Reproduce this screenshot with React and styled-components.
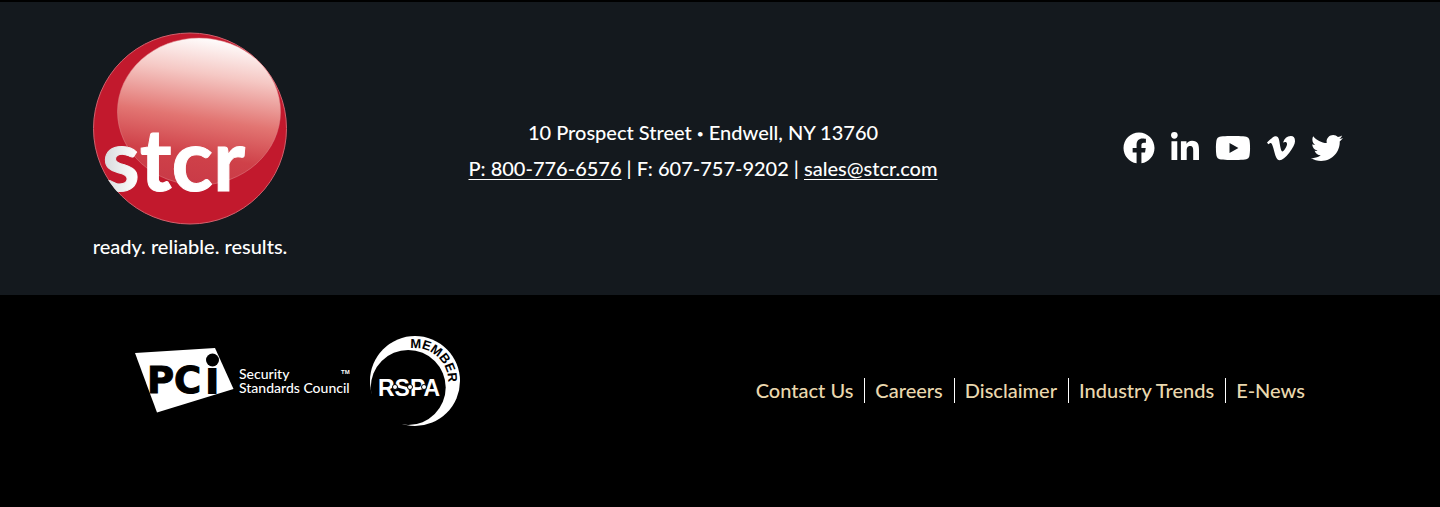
import React from "react";
import styled, { createGlobalStyle } from "styled-components";
import { FaFacebook, FaLinkedinIn, FaYoutube, FaVimeoV, FaTwitter } from "react-icons/fa";

const GlobalStyle = createGlobalStyle`
  *, *::before, *::after { box-sizing: border-box; }
  body {
    margin: 0;
    background: #000;
    color: #fff;
    font-family: Lato, "Open Sans", sans-serif;
    font-size: 20px;
    font-weight: 500;
  }
`;

const Footer = styled.footer`
  border-top: 2px solid #000;
`;

const MainBand = styled.section`
  display: grid;
  grid-template-columns: 200px 1fr 227px;
  align-items: center;
  padding: 30px 97px 32px 90px;
  background: #14191e;
`;

const Brand = styled.a`
  display: block;
  color: inherit;
  text-align: center;
  text-decoration: none;
  white-space: nowrap;
`;

const BrandMark = styled.svg`
  display: block;
  width: 100%;
  height: auto;
  margin-bottom: 6px;
`;

const Tagline = styled.span`
  display: block;
  line-height: 30px;
  margin-bottom: 2px;
`;

const Contact = styled.address`
  padding-top: 4px;
  font-style: normal;
  line-height: 36px;
  text-align: center;
`;

const ContactLine = styled.p`
  margin: 0;
`;

const Bullet = styled.span`
  font-size: 12px;
  line-height: 1;
  vertical-align: 2px;
`;

const ContactLink = styled.a`
  color: inherit;
  text-underline-offset: 3px;
  text-decoration-thickness: 1px;
`;

const Social = styled.nav`
  display: flex;
  justify-content: flex-end;
  gap: 16px;
`;

const SocialLink = styled.a`
  display: block;
  width: ${({ $width }) => $width}px;
  color: inherit;

  svg {
    display: block;
    width: 100%;
    height: 32px;
  }
`;

const LegalBand = styled.section`
  display: flex;
  align-items: center;
  justify-content: space-between;
  padding: 41px 135px 80px;
`;

const Badges = styled.div`
  display: flex;
  align-items: center;
  gap: 20px;
`;

const Badge = styled.svg`
  display: block;
  flex: none;
`;

const Links = styled.ul`
  display: flex;
  margin: 18px 0 0;
  padding: 0;
  list-style: none;
`;

const LinkItem = styled.li`
  line-height: 25px;

  & + & {
    margin-left: 11px;
    padding-left: 10px;
    border-left: 1px solid #fff;
  }
`;

const FooterLink = styled.a`
  color: #ead8ae;
  text-decoration: none;
`;

const socialLinks = [
  ["Facebook", FaFacebook, 32],
  ["LinkedIn", FaLinkedinIn, 28],
  ["YouTube", FaYoutube, 36],
  ["Vimeo", FaVimeoV, 28],
  ["Twitter", FaTwitter, 32],
];

const footerLinks = ["Contact Us", "Careers", "Disclaimer", "Industry Trends", "E-News"];

function StcrMark() {
  return (
    <BrandMark viewBox="0 0 200 193" role="img" aria-label="stcr">
      <defs>
        <linearGradient id="gloss" x1="0.62" y1="0" x2="0.45" y2="1">
          <stop offset="0" stopColor="#ffffff" />
          <stop offset="0.25" stopColor="#f5c8c4" />
          <stop offset="0.55" stopColor="#e27572" />
          <stop offset="0.8" stopColor="#cf4149" />
          <stop offset="1" stopColor="#c93a47" />
        </linearGradient>
        <linearGradient id="lettering" x1="0" y1="0" x2="1" y2="0">
          <stop offset="0" stopColor="#d5d8da" />
          <stop offset="0.25" stopColor="#ffffff" />
        </linearGradient>
        <clipPath id="ball">
          <ellipse cx="100" cy="96.5" rx="97" ry="96" />
        </clipPath>
      </defs>
      <ellipse cx="100" cy="96.5" rx="96.5" ry="95.5" fill="#c2192d" stroke="#d0606c" strokeWidth="1" />
      <ellipse cx="109" cy="79.5" rx="81.5" ry="73.5" fill="url(#gloss)" stroke="#e08a8c" strokeWidth="0.5" />
      <g clipPath="url(#ball)">
        <text
          x="12"
          y="159"
          fill="url(#lettering)"
          stroke="url(#lettering)"
          strokeWidth="1"
          fontFamily="Lato"
          fontSize="86"
          fontWeight="700"
        >
          stcr
        </text>
      </g>
    </BrandMark>
  );
}

function PciBadge() {
  return (
    <Badge width="215" height="66" viewBox="0 0 215 66" role="img" aria-label="PCI Security Standards Council">
      <polygon points="0,5 80,0 98.5,41 22,64.5" fill="#fff" />
      <g fill="#000" fontFamily="DejaVu Sans" fontWeight="700">
        <text x="12" y="45" fontSize="37" stroke="#000" strokeWidth="1">PC</text>
        <text x="69" y="46" fontSize="48">i</text>
      </g>
      <circle cx="77.5" cy="12" r="6.5" fill="#000" />
      <g fill="#fff" fontFamily="Lato" fontSize="14">
        <text x="104" y="31">Security</text>
        <text x="104" y="45">Standards Council</text>
      </g>
      <text x="206" y="26" fill="#fff" fontFamily="Liberation Sans" fontSize="6" fontWeight="700">TM</text>
    </Badge>
  );
}

function RspaBadge() {
  return (
    <Badge width="91" height="90" viewBox="0 0 91 90" role="img" aria-label="RSPA Member">
      <defs>
        <path id="memberArc" d="M 12 45 A 33 33 0 0 1 78 45 A 33 33 0 0 1 45 78" />
      </defs>
      <circle cx="45" cy="45" r="45" fill="#fff" />
      <circle cx="38.2" cy="51.5" r="37.5" fill="#000" />
      <text fill="#000" fontFamily="Liberation Sans" fontSize="13" fontWeight="700">
        <textPath href="#memberArc" startOffset="76" textAnchor="middle">MEMBER</textPath>
      </text>
      <text x="8" y="59.5" fill="#fff" fontFamily="Liberation Sans" fontSize="23" fontWeight="700">RSPA</text>
      <g fill="#fff" stroke="#000" strokeWidth="1">
        <circle cx="25" cy="51" r="2.5" />
        <circle cx="40" cy="51" r="2.5" />
        <circle cx="54" cy="51" r="2.5" />
      </g>
    </Badge>
  );
}

export default function App() {
  return (
    <>
      <GlobalStyle />
      <Footer>
        <MainBand>
          <Brand href="#home">
            <StcrMark />
            <Tagline>ready. reliable. results.</Tagline>
          </Brand>
          <Contact>
            <ContactLine>
              10 Prospect Street <Bullet>•</Bullet> Endwell, NY 13760
            </ContactLine>
            <ContactLine>
              <ContactLink href="tel:8007766576">P: 800-776-6576</ContactLink> | F: 607-757-9202 |{" "}
              <ContactLink href="mailto:sales@stcr.com">sales@stcr.com</ContactLink>
            </ContactLine>
          </Contact>
          <Social aria-label="Social media">
            {socialLinks.map(([name, Icon, width]) => (
              <SocialLink key={name} href={`#${name.toLowerCase()}`} aria-label={name} $width={width}>
                <Icon />
              </SocialLink>
            ))}
          </Social>
        </MainBand>
        <LegalBand>
          <Badges>
            <PciBadge />
            <RspaBadge />
          </Badges>
          <nav aria-label="Footer">
            <Links>
              {footerLinks.map((label) => (
                <LinkItem key={label}>
                  <FooterLink href={`#${label.toLowerCase().replace(/\s+/g, "-")}`}>{label}</FooterLink>
                </LinkItem>
              ))}
            </Links>
          </nav>
        </LegalBand>
      </Footer>
    </>
  );
}
